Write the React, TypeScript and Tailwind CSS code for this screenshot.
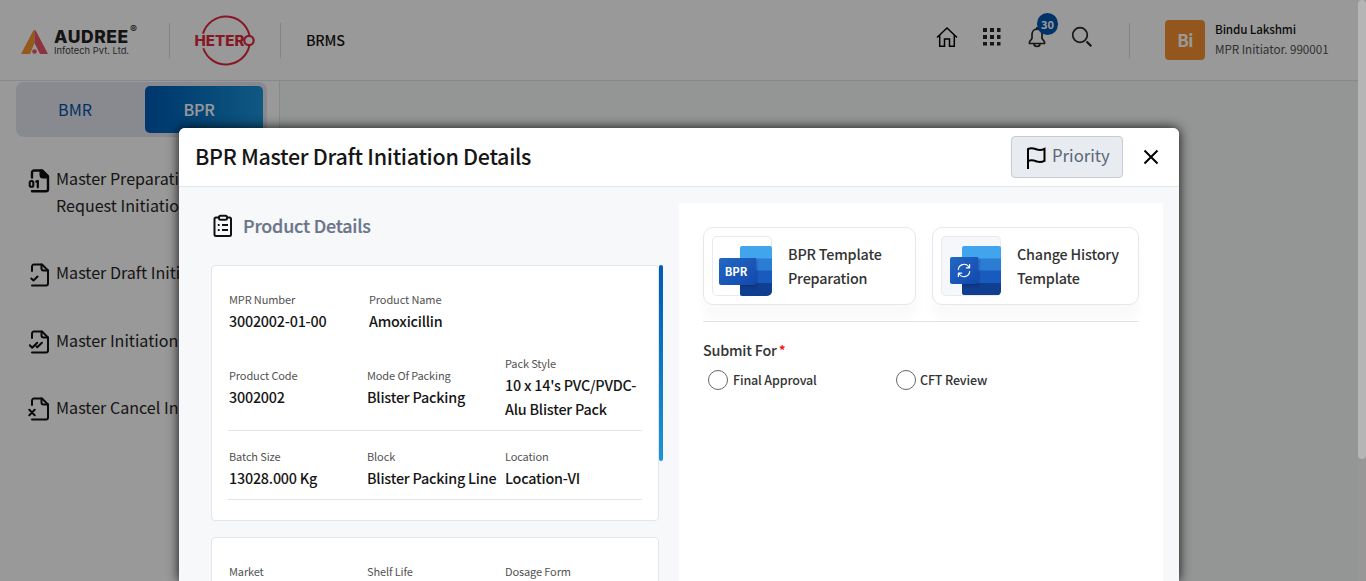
import React from "react";

const ink = "#111";

function AudreeLogo() {
  return (
    <div className="flex w-[118px] items-start">
      <svg width="27" height="24" viewBox="0 0 27 24" className="mt-[3px] shrink-0">
        <path d="M13.500 0v13L9 24H0L11.500 2Q12.300 0 13.500 0Z" fill="#f6962f" />
        <path d="M13.500 0Q14.700 0 15.500 2L27 24H19L13.500 13Z" fill="#e8576a" />
        <circle cx="13.500" cy="21.500" r="2.300" fill="#e8576a" />
      </svg>
      <div className="-mt-px ml-[6px] w-[76px]">
        <div className="font-[Inter] text-[17.500px] font-extrabold leading-[21px] tracking-[0.550px] text-[#222]">AUDREE</div>
        <div className="whitespace-nowrap font-[Inter] text-[9.300px] leading-[7px] tracking-[0.030px] text-[#444]">Infotech Pvt. Ltd.</div>
      </div>
      <span className="-mt-[2px] font-[Inter] text-[10.500px] font-semibold leading-[10px] text-[#222]">®</span>
    </div>
  );
}

function HeteroLogo() {
  return (
    <svg width="62" height="51" viewBox="0 0 62 51" className="font-[Inter]">
      <path d="M8 18.600A24 24 0 0 1 54.400 20.200M54.400 30.800A24 24 0 0 1 8.300 33.200" fill="none" stroke="#e0283c" strokeWidth="2" />
      <text x="-.5" y="30.800" fontSize="14.500" fontWeight="800" fill="#e0283c" textLength="50" lengthAdjust="spacingAndGlyphs">HETER</text>
      <circle cx="54" cy="25.500" r="4.700" fill="none" stroke="#e0283c" strokeWidth="2.200" />
    </svg>
  );
}

function FileIcon({ kind }: { kind: "digits" | "check" | "double" | "cross" }) {
  return (
    <svg width="24" height="24" viewBox="0 0 24 24" fill="none" stroke={ink} strokeWidth="2" strokeLinecap="round" strokeLinejoin="round" className="shrink-0">
      {kind === "digits" ? (
        <>
          <path d="M4 8.500V3.500a2 2 0 0 1 2-2h8l6 6v12.700a2 2 0 0 1-2 2H4" strokeWidth="2.400" />
          <path d="M12.500 1.500v4.500a2.500 2.500 0 0 0 2.500 2.500h5V7L14.500 1.500z" fill={ink} />
          <rect x="1.700" y="12" width="3.600" height="5.800" rx="1.600" strokeWidth="2" />
          <path d="M8.300 12.600l1.500-.6v6.300" strokeWidth="2.200" />
        </>
      ) : (
        <>
          <path d="M4 8V3.500a2 2 0 0 1 2-2h8l6 6v13a2 2 0 0 1-2 2H4" />
          <path d="M13.500 1.500v4a2 2 0 0 0 2 2h4.500" />
        </>
      )}
      {kind === "check" && <path d="M3.300 15.500l2.200 2 4-4" />}
      {kind === "double" && <path d="M1.800 15.300l2.400 2.400 5-5M8.500 16.500l.700.700 4.700-4.500" />}
      {kind === "cross" && <path d="M1.300 12.800l5.400 5.400M6.700 12.800l-5.400 5.400" />}
    </svg>
  );
}

function MenuItem({ kind, children, className }: { kind: "digits" | "check" | "double" | "cross"; children: React.ReactNode; className: string }) {
  return (
    <li className={`flex gap-[4px] whitespace-nowrap text-[16.100px] leading-[27px] text-[#262626] ${className}`}>
      <div className={kind === "digits" || kind === "check" ? "pt-[4px]" : "pt-[3px]"}><FileIcon kind={kind} /></div>
      <span>{children}</span>
    </li>
  );
}

function Field({ label, value, className = "" }: { label: string; value?: React.ReactNode; className?: string }) {
  return (
    <div className={`whitespace-nowrap ${className}`}>
      <div className="text-[11px] leading-[16px] tracking-[-0.120px] text-[#525252]">{label}</div>
      {value && <div className="mt-[2px] text-[14.350px] font-medium leading-[24px] tracking-[-0.210px] text-[#161616]">{value}</div>}
    </div>
  );
}

function WordIcon({ history = false }: { history?: boolean }) {
  const top = history ? 21 : 22;
  return (
    <div className={`h-[60px] w-[60px] shrink-0 overflow-hidden rounded-[5px] shadow-[inset_0_0_0_1px_#e8eaed] ${history ? "bg-[#f6f7fa]" : "bg-white"}`}>
      <svg width="60" height="60" viewBox="0 0 60 60">
        <defs>
          <linearGradient id="tile" x1="0" y1="0" x2="1" y2="1">
            <stop offset="0" stopColor="#2368c4" />
            <stop offset="1" stopColor="#1248ae" />
          </linearGradient>
          <clipPath id="book"><rect x="28" y="10" width="32" height="50" rx="2" /></clipPath>
          <clipPath id="bookHistory"><rect x="21" y="10" width="39" height="49" rx="2" /></clipPath>
          <filter id="soft" x="-20%" y="-20%" width="150%" height="160%">
            <feDropShadow dx="1" dy="2" stdDeviation="1" floodColor="#0a2050" floodOpacity=".6" />
          </filter>
        </defs>
        <g clipPath={history ? "url(#bookHistory)" : "url(#book)"}>
          <path fill="#41a5ee" d="M20 10h40v13H20z" />
          <path fill="#2b7cd3" d="M20 22.500h40V35H20z" />
          <path fill="#185abd" d="M20 34.500h40V47H20z" />
          <path fill="#103f91" d="M20 47h40v13H20z" />
          <rect x={history ? 9 : 7} y={top} width={history ? 28 : 37} height="27.500" fill="#0a2a66" opacity=".6" filter="url(#soft)" />
        </g>
        <rect x={history ? 9 : 7} y={top} width={history ? 28 : 37} height="27" rx="2" fill="url(#tile)" />
        {history ? (
          <g fill="none" stroke="#fff" strokeWidth="1.200" strokeLinecap="round" strokeLinejoin="round">
            <path d="M17.300 33.500a5.800 5.800 0 0 1 10.300-3l1 1.200M28.600 28.500v3.300h-3.300M28.700 35.500a5.800 5.800 0 0 1-10.300 3l-1-1.200M17.400 40.500v-3.300h3.300" />
          </g>
        ) : (
          <text x="24" y="39.500" textAnchor="middle" fontSize="11.200" fontWeight="700" fill="#fff">BPR</text>
        )}
      </svg>
    </div>
  );
}

export default function App() {
  return (
    <div className="relative h-[581px] w-full overflow-hidden bg-white font-['Noto_Sans_CJK_SC','Noto_Sans',sans-serif]">
      <div className="flex h-full flex-col">
        <header className="flex h-[81px] shrink-0 items-center border-b border-[#dfe2ee] pl-[21px]">
          <AudreeLogo />
          <div className="ml-[30px] h-[35px] w-px bg-[#dcdcdc]" />
          <div className="ml-[25px]"><HeteroLogo /></div>
          <div className="ml-[23px] h-[35px] w-px bg-[#dcdcdc]" />
          <div className="ml-[25px] text-[14.350px] font-medium tracking-[-0.200px] text-[#161616]">BRMS</div>
          <div className="ml-auto mr-[37px] flex items-center">
            <svg width="22" height="22" viewBox="0 0 22 22" fill="none" stroke="#000" strokeWidth="1.500" className="mb-[6px]">
              <path d="M1 11.500L11 2l10 9.500M3.700 9.500v10.800h4.800v-7.200h5v7.200h4.800V9.500" />
            </svg>
            <svg width="18" height="18" viewBox="0 0 18 18" fill="#262626" className="mb-[6px] ml-[25px]">
              <path d="M0 0h4v4H0zM7 0h4v4H7zM14 0h3.500v4H14zM0 7h4v4H0zM7 7h4v4H7zM14 7h3.500v4H14zM0 14h4v3.500H0zM7 14h4v3.500H7zM14 14h3.500v3.500H14z" />
            </svg>
            <div className="relative mb-[6px] ml-[27px]">
              <svg width="18" height="22" viewBox="0 0 18 22" fill="none" stroke="#262626" strokeWidth="1.700" strokeLinejoin="round">
                <path d="M9 3.200c-3.200 0-5 2.500-5 5.300v4l-2.500 3.300v1.700h15v-1.700L14 12.500v-4c0-2.800-1.800-5.300-5-5.300zM9 1v2.200M6 17.500a3 3 0 0 0 6 0" />
              </svg>
              <span className="absolute -top-[13px] left-[9px] flex h-[22px] w-[21px] items-center justify-center rounded-full bg-[#0058b0] text-[11px] font-bold leading-none text-white">30</span>
            </div>
            <svg width="22" height="22" viewBox="0 0 22 22" fill="none" stroke="#262626" strokeWidth="1.700" className="mb-[6px] ml-[25px]">
              <circle cx="9" cy="9" r="7.300" /><path d="M15.500 15.500l4.800 4.800" strokeWidth="2.200" />
            </svg>
            <div className="ml-[36px] h-[35px] w-px bg-[#dcdcdc]" />
            <div className="ml-[35px] flex h-[40px] w-[40px] items-center justify-center rounded-[4px] bg-[#f69133] text-[17px] font-bold tracking-[-0.600px] text-white">Bi</div>
            <div className="ml-[10px] w-[114px] -translate-y-px whitespace-nowrap text-[11.700px] leading-[20px]">
              <div className="font-medium tracking-[-0.150px] text-[#161616]">Bindu Lakshmi</div>
              <div className="tracking-[-0.050px] text-[#525252]">MPR Initiator. 990001</div>
            </div>
          </div>
        </header>
        <div className="flex min-h-0 flex-1">
          <aside className="w-[280px] shrink-0 border-r border-[#e2e4ea] bg-white">
            <div className="ml-[16px] mt-px flex h-[55px] w-[251px] rounded-[8px] bg-[#e4e7f0] p-[4px]">
              <div className="flex w-[125px] items-center justify-center pr-[15px] text-[16.100px] text-[#0054a6]">BMR</div>
              <div className="flex h-[47px] w-[118px] items-center justify-center rounded-[5px] bg-linear-to-r from-[#005bb5] to-[#1a94da] pr-[10px] text-[16.100px] font-medium tracking-[-0.200px] text-white">BPR</div>
            </div>
            <ul className="ml-[28px]">
              <MenuItem kind="digits" className="mt-[28px]">Master Preparation<br />Request Initiation</MenuItem>
              <MenuItem kind="check" className="mt-[40px]">Master Draft Initiation</MenuItem>
              <MenuItem kind="double" className="mt-[40px]">Master Initiation</MenuItem>
              <MenuItem kind="cross" className="mt-[40px]">Master Cancel Initiation</MenuItem>
            </ul>
          </aside>
          <main className="flex-1 bg-[#f5faf7]" />
        </div>
      </div>

      <div className="absolute inset-0 flex bg-black/40 pt-[128px]">
        <section className="ml-[179px] flex w-[1000px] flex-col overflow-hidden rounded-t-[6px] bg-[#f6f8fa] shadow-[0_0_12px_rgba(0,0,0,0.9)]">
          <div className="flex h-[59px] shrink-0 items-center border-b border-[#e3e6f0] bg-white pl-[16px]">
            <h1 className="pb-[2px] text-[21.500px] font-medium tracking-[-0.310px] text-[#161616]">BPR Master Draft Initiation Details</h1>
            <button className="ml-auto flex h-[42px] w-[112px] items-center rounded-[4px] border border-[#c6cad2] bg-[#e8ebf0] pl-[12px]">
              <svg width="24" height="24" viewBox="0 0 24 24" fill="none" stroke="#000" strokeWidth="2" className="mt-[2px]">
                <path d="M4 23V3c4-2 6-.5 9 .5 3 .8 5 .5 7.500-.7v12c-2.500 1.200-4.500 1.500-7.500.7-3-1-5-2-9-.5" />
              </svg>
              <span className="ml-[4px] pb-[2px] text-[16.700px] text-[#5b6678]">Priority</span>
            </button>
            <svg width="16" height="16" viewBox="0 0 16 16" stroke="#000" strokeWidth="2" className="ml-[20px] mr-[20px]"><path d="M1.500 1.500l13 13M14.500 1.500l-13 13" /></svg>
          </div>
          <div className="flex min-h-0 flex-1 gap-[16px] pl-[32px] pt-[16px]">
            <div className="w-[452px] shrink-0">
              <div className="flex h-[46px] items-center">
                <svg width="24" height="24" viewBox="0 0 24 24" fill="none" stroke="#111" strokeWidth="2" strokeLinejoin="round">
                  <path d="M8 3.500H5A1.500 1.500 0 0 0 3.500 5v15.500A1.500 1.500 0 0 0 5 22h13.500a1.500 1.500 0 0 0 1.500-1.500V5A1.500 1.500 0 0 0 18.500 3.500H16" />
                  <rect x="8" y="1.800" width="8" height="4" rx="1.500" />
                  <path d="M6.800 11h1.800M11 11h6M6.800 16h1.800M11 16h6" />
                </svg>
                <h2 className="ml-[8px] pb-[2px] text-[17.900px] font-medium tracking-[-0.200px] text-[#6b7588] [-webkit-text-stroke:0.200px_#6b7588]">Product Details</h2>
              </div>
              <div className="mt-[16px] flex items-start">
                <div className="w-[448px] shrink-0">
                  <div className="h-[256px] rounded-[4px] border border-[#e3e6ea] bg-white px-[16px] pt-[25px]">
                    <div className="flex pl-px">
                      <Field className="w-[140px]" label="MPR Number" value="3002002-01-00" />
                      <Field label="Product Name" value="Amoxicillin" />
                    </div>
                    <div className="mt-[22px] flex h-[76px] items-center border-b border-[#e5e5e5] pb-[10px] pl-px">
                      <Field className="w-[138px]" label="Product Code" value="3002002" />
                      <Field className="w-[138px]" label="Mode Of Packing" value="Blister Packing" />
                      <Field label="Pack Style" value={<>10 x 14&apos;s PVC/PVDC-<br />Alu Blister Pack</>} />
                    </div>
                    <div className="flex h-[69px] border-b border-[#e5e5e5] pl-px pt-[17px]">
                      <Field className="w-[138px]" label="Batch Size" value="13028.000 Kg" />
                      <Field className="w-[138px]" label="Block" value="Blister Packing Line" />
                      <Field label="Location" value="Location-VI" />
                    </div>
                  </div>
                  <div className="mt-[16px] flex h-[200px] rounded-[4px] border border-[#e3e6ea] bg-white pl-[17px] pt-[25px]">
                    <Field className="w-[138px]" label="Market" />
                    <Field className="w-[138px]" label="Shelf Life" />
                    <Field label="Dosage Form" />
                  </div>
                </div>
                <div className="h-[196px] w-[4px] rounded-[2px] bg-linear-to-b from-[#005bb5] to-[#1a94da]" />
              </div>
            </div>
            <div className="h-[400px] w-[484px] shrink-0 bg-white px-[24px] pt-[24px]">
              <div className="flex h-[95px] w-[436px] gap-[16px] border-b border-[#e5e5e8]">
                {["BPR Template Preparation", "Change History Template"].map((title, i) => (
                  <div key={title} className={`flex h-[78px] shrink-0 items-center rounded-[10px] border border-[#e5e7eb] bg-white pl-[8px] shadow-[0_15px_12px_rgba(0,0,0,0.025)] ${i ? "w-[207px]" : "w-[213px]"}`}>
                    <WordIcon history={i === 1} />
                    <div className="ml-[16px] w-[110px] text-[14.350px] font-medium leading-[24px] tracking-[-0.170px] text-[#333]">{title}</div>
                  </div>
                ))}
              </div>
              <div className="mt-[16px] text-[14.350px] font-medium leading-[24px] tracking-[-0.200px] text-[#333]">Submit For<span className="ml-[2px] text-[#f00]">*</span></div>
              <div className="mt-[8px] flex pl-[5px] text-[12.500px] font-medium leading-[20px] tracking-[-0.150px] text-[#333]">
                <div className="flex w-[188px] items-center"><span className="mr-[5px] h-[20px] w-[20px] rounded-full border border-[#666]" />Final Approval</div>
                <div className="flex items-center"><span className="mr-[4px] h-[20px] w-[20px] rounded-full border border-[#666]" />CFT Review</div>
              </div>
            </div>
          </div>
        </section>
      </div>
      <div className="absolute right-0 top-0 h-full w-[8px] bg-[#979797]">
        <div className="h-[459px] rounded-[4px] bg-[#b4b5b4]" />
      </div>
    </div>
  );
}
